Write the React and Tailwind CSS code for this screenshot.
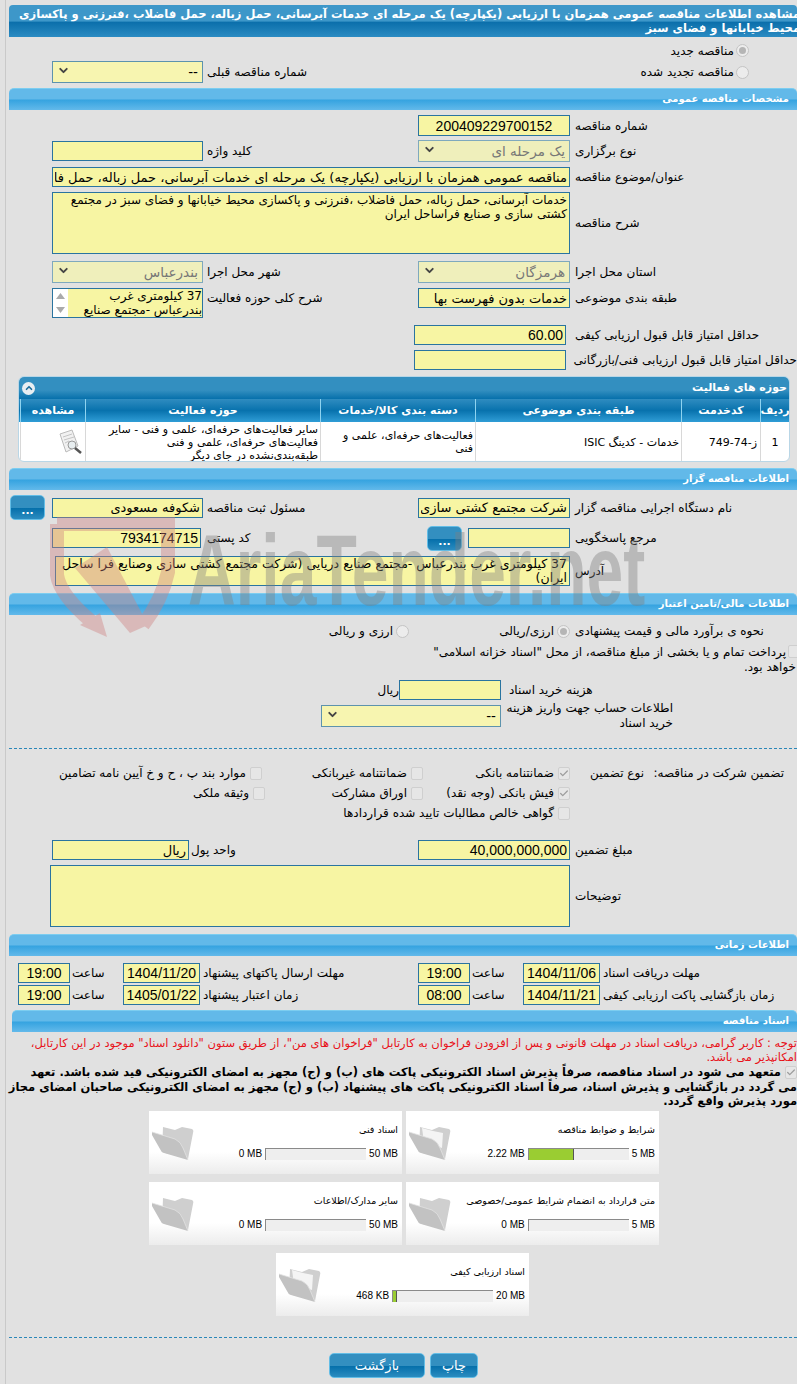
import React from 'react';
import { twMerge } from 'tailwind-merge';
import { Check, ChevronDown, ChevronUp } from 'lucide-react';

const field = 'block shrink-0 bg-[#f7f5a3] border border-[#2a74a0] text-[13px] leading-[18px] text-black outline-none px-0.5 m-0 resize-none';
const num = "font-['Liberation_Sans','DejaVu_Sans',sans-serif] text-[14px]";

const Input = ({ value = '', className }) => (
  <input readOnly value={value} dir="rtl" className={twMerge(field, className)} />
);

const Area = ({ value = '', className }) => (
  <textarea readOnly value={value} dir="rtl" className={twMerge(field, 'overflow-hidden', className)} />
);

const Select = ({ value, disabled, className }) => (
  <div className={twMerge('flex shrink-0 items-center justify-between border px-1 text-[13.5px]', disabled ? 'bg-[#efefbb] border-[#7fa9bd] text-[#777]' : 'bg-[#f7f5b0] border-[#5d93ad] text-black', className)}>
    <span>{value}</span>
    <ChevronDown size={13} strokeWidth={3.5} className="-mt-1 text-[#444]" />
  </div>
);

const Radio = ({ on }) => (
  <span className="flex h-[13px] w-[13px] shrink-0 items-center justify-center rounded-full border border-[#c4c4c4] bg-[#ececec]">
    {on && <span className="h-[7px] w-[7px] rounded-full bg-[#b5b5b5]" />}
  </span>
);

const Box = ({ on }) => (
  <span className="flex h-[13px] w-[12px] shrink-0 items-center justify-center rounded-[2px] border border-[#cfcfcf] bg-[#e6e6e6]">
    {on && <Check size={11} strokeWidth={3} className="text-[#9c9c9c]" />}
  </span>
);

const Bar = ({ title, className }) => (
  <div className={twMerge('h-[22px] rounded-t-[5px] border-t border-[#7ccdf0] bg-[linear-gradient(#62b9e9_0%,#62b9e9_48%,#35a3e0_52%,#62b9ea_100%)] pr-2 text-[10px] font-bold leading-[20px] text-white', className)}>
    {title}
  </div>
);

const Dots = ({ className }) => (
  <div className={twMerge('flex h-[25px] w-[35px] shrink-0 items-end justify-center rounded-[5px] border border-[#63bde6] bg-[linear-gradient(#338fc0_0%,#338fc0_50%,#0670ab_54%,#2b8cc0_100%)] pb-0.5 text-[11px] font-bold leading-[12px] text-white', className)}>
    ...
  </div>
);

const Btn = ({ children, className }) => (
  <div className={twMerge('flex h-[25px] items-center justify-center rounded-[5px] border border-[#63bde6] bg-[linear-gradient(#338fc0_0%,#338fc0_50%,#0670ab_54%,#2b8cc0_100%)] text-[13px] text-white', className)}>
    {children}
  </div>
);

const LabelR = ({ children, className }) => (
  <div className={twMerge('w-[227px] shrink-0 whitespace-nowrap pl-[5px] text-left', className)}>{children}</div>
);

const LabelL = ({ children, className }) => (
  <div className={twMerge('w-[215px] shrink-0 whitespace-nowrap pl-[4px] text-left', className)}>{children}</div>
);

const Folder = ({ paper }) => (
  <svg width="46" height="40" viewBox="0 0 46 40" className="shrink-0">
    <path d="M12 3 L24 6 L31 3 L41 5 Q43 6 42 9 L37 35 L11 28 Z" fill="#cfcfcf" />
    {paper && <path d="M14 4 L25 7 L35 9 L34 24 L16 18 Z" fill="#f4f4f4" />}
    <path d="M1 8 L24 15 Q30 18 32 24 L37 36 L13 29 Q10 28 9 25 L1 11 Z" fill="#c2c2c2" />
    <path d="M1 8 L24 15 Q30 18 32 24 L37 36" fill="none" stroke="#e2e2e2" strokeWidth="0.8" />
  </svg>
);

const DocCard = ({ title, used, max, pct, paper, className }) => (
  <div className={twMerge('flex h-[63px] w-[253px] items-start bg-[linear-gradient(#ffffff_0%,#ffffff_65%,#ececec_100%)] pr-[4px]', className)}>
    <div className="flex-1 pt-[13px]">
      <div className="h-[22px] whitespace-nowrap text-[9.5px] leading-[12px]">{title}</div>
      <div className="mt-[2px] flex items-center gap-[3px] font-['Liberation_Sans',sans-serif] text-[10px] leading-[12px]">
        <span dir="ltr" className="whitespace-nowrap">{max}</span>
        <div dir="ltr" className="h-[12px] w-[101px] shrink-0 border-l border-t border-[#8a8a8a] bg-[#eeeeee]">
          {pct > 0 && <div className="h-full border-r border-[#555] bg-[#9acd32]" style={{ width: `${pct}%` }} />}
        </div>
        <span dir="ltr" className="whitespace-nowrap">{used}</span>
      </div>
    </div>
    <div className="ml-[2px] mt-[13px]"><Folder paper={paper} /></div>
  </div>
);

const TH = ({ children, className }) => (
  <div className={twMerge('flex items-center justify-center whitespace-nowrap border-l border-[#8ed3f0] text-[11px] font-bold text-white', className)}>{children}</div>
);

const TD = ({ children, className }) => (
  <div className={twMerge('flex items-center border-l border-[#d8d8d8] px-0.5 text-[11px] leading-[13px]', className)}>{children}</div>
);

const Watermark = () => (
  <div className="pointer-events-none absolute left-[40px] top-[500px] z-10 h-[150px] w-[620px]">
    <svg width="150" height="145" viewBox="0 0 150 145" className="absolute left-0 top-0 opacity-40">
      <path d="M17 24 H128 V72 Q122 100 103 125 M17 24 V75 Q20 95 52 122" fill="none" stroke="#cf7f7f" strokeWidth="14" />
      <path d="M35 68 L67 47 L108 125 L90 133 Z" fill="#cf7f7f" />
      <path d="M40 125 L60 113 L67 137 Z" fill="#cf7f7f" />
    </svg>
    <div dir="ltr" className="absolute left-[148px] top-[20px] origin-left scale-x-[0.66] whitespace-nowrap font-['Liberation_Sans',sans-serif] text-[100px] font-bold leading-[100px] text-[#808080] opacity-40">
      AriaTender.net
    </div>
  </div>
);

export default function App() {
  return (
    <div dir="rtl" className="relative h-[1384px] w-[797px] overflow-hidden bg-[#e1e1e1] font-['DejaVu_Sans',sans-serif] text-[12px] leading-[16px] text-black">
      <div className="absolute bottom-0 left-[5px] top-0 w-px bg-[#c9c9c9]" />
      <Watermark />

      <div className="ml-[9px] pt-[5px]">
        {/* title */}
        <div className="h-[32px] overflow-hidden rounded-t-[4px] bg-[linear-gradient(#3d97c9_0%,#3d97c9_50%,#0b6fab_54%,#2b8bc2_100%)] pt-[2px] text-[11.5px] font-bold leading-[14px] text-white">
          <div className="-mr-[3px] whitespace-nowrap">مشاهده اطلاعات مناقصه عمومی همزمان با ارزیابی (یکپارچه) یک مرحله ای خدمات آبرسانی، حمل زباله، حمل فاضلاب ،فنرزنی و پاکسازی</div>
          <div className="-mr-[3px] whitespace-nowrap">محیط خیابانها و فضای سبز</div>
        </div>

        <div className="mt-[5px] flex h-[17px] items-center gap-[2px] pr-[48px]">
          <Radio on /><span>مناقصه جدید</span>
        </div>
        <div className="mt-[2px] flex h-[22px]">
          <div className="flex w-[379px] shrink-0 items-center gap-[2px] pr-[48px]"><Radio /><span className="whitespace-nowrap">مناقصه تجدید شده</span></div>
          <LabelL className="self-center">شماره مناقصه قبلی</LabelL>
          <Select value="--" className="h-[22px] w-[151px]" />
        </div>

        <Bar title="مشخصات مناقصه عمومی" className="mt-[5px]" />
      </div>

      {/* general */}
      <div className="mt-[5px] flex h-[21px] items-center"><LabelR>شماره مناقصه</LabelR><Input value="200409229700152" className={`h-[21px] w-[152px] text-center ${num}`} /></div>
      <div className="mt-[4px] flex h-[22px] items-center">
        <LabelR>نوع برگزاری</LabelR><Select disabled value="یک مرحله ای" className="h-[22px] w-[152px]" />
        <LabelL>کلید واژه</LabelL><Input className="h-[20px] w-[151px]" />
      </div>
      <div className="mt-[5px] flex h-[20px] items-center">
        <LabelR>عنوان/موضوع مناقصه</LabelR>
        <Input value="مناقصه عمومی همزمان با ارزیابی (یکپارچه) یک مرحله ای خدمات آبرسانی، حمل زباله، حمل فاضلاب ،فنرزنی و پاکسازی" className="h-[20px] w-[518px]" />
      </div>
      <div className="mt-[5px] flex h-[62px] items-center">
        <LabelR>شرح مناقصه</LabelR>
        <Area value="خدمات آبرسانی، حمل زباله، حمل فاضلاب ،فنرزنی و پاکسازی محیط خیابانها و فضای سبز در مجتمع کشتی سازی و صنایع فراساحل ایران" className="h-[62px] w-[518px] text-[12px] leading-[14px]" />
      </div>
      <div className="mt-[7px] flex h-[22px] items-center">
        <LabelR>استان محل اجرا</LabelR><Select disabled value="هرمزگان" className="h-[22px] w-[152px]" />
        <LabelL>شهر محل اجرا</LabelL><Select disabled value="بندرعباس" className="h-[22px] w-[151px]" />
      </div>
      <div className="mt-[5px] flex h-[30px] items-start">
        <LabelR className="pt-[2px]">طبقه بندی موضوعی</LabelR><Input value="خدمات بدون فهرست بها" className="h-[20px] w-[152px]" />
        <LabelL className="pt-[2px]">شرح کلی حوزه فعالیت</LabelL>
        <div className="flex h-[30px] w-[151px] shrink-0 border border-[#2a74a0] bg-[#f7f5a3]">
          <div className="flex-1 overflow-hidden text-[12px] leading-[14px]">37 کیلومتری غرب<br />بندرعباس -مجتمع صنایع</div>
          <div className="flex w-[15px] flex-col items-center justify-between bg-white py-[4px]">
            <svg width="9" height="6" viewBox="0 0 9 6"><path d="M4.5 0 L9 6 H0 Z" fill="#aaa" /></svg>
            <svg width="9" height="6" viewBox="0 0 9 6"><path d="M4.5 6 L9 0 H0 Z" fill="#aaa" /></svg>
          </div>
        </div>
      </div>
      <div className="mt-[7px] flex h-[20px] items-center"><LabelR>حداقل امتیاز قابل قبول ارزیابی کیفی</LabelR><Input value="60.00" className={`mr-[4px] h-[20px] w-[152px] ${num}`} /></div>
      <div className="mt-[5px] flex h-[20px] items-center"><LabelR>حداقل امتیاز قابل قبول ارزیابی فنی/بازرگانی</LabelR><Input className="mr-[4px] h-[20px] w-[152px]" /></div>

      {/* activity table */}
      <div className="mr-[7px] mt-[6px] h-[86px] w-[772px] overflow-hidden rounded-[6px] border border-[#b9d6e6] bg-white">
        <div className="flex h-[22px] items-center justify-between bg-[linear-gradient(#338fc0_0%,#338fc0_60%,#0670ab_100%)] pl-[3px] pr-[2px] text-[11px] font-bold text-white">
          <span>حوزه های فعالیت</span>
          <span className="flex h-[13px] w-[13px] items-center justify-center rounded-full bg-[#e8eef2]"><ChevronUp size={10} strokeWidth={4} className="text-[#1b6d9d]" /></span>
        </div>
        <div className="grid h-[23px] grid-cols-[29px_79px_206px_155px_235px_65px_1fr] bg-[linear-gradient(#2f8cc0_0%,#0872ad_50%,#2f9dd6_100%)]">
          <TH>ردیف</TH><TH>کدخدمت</TH><TH>طبقه بندی موضوعی</TH><TH>دسته بندی کالا/خدمات</TH><TH>حوزه فعالیت</TH><TH>مشاهده</TH><div />
        </div>
        <div className="grid h-[40px] grid-cols-[29px_79px_206px_155px_235px_65px_1fr] overflow-hidden">
          <TD className="justify-center">1</TD>
          <TD className="pr-[3px]">ز-74-749</TD>
          <TD>خدمات - کدینگ ISIC</TD>
          <TD>فعالیت‌های حرفه‌ای، علمی و فنی</TD>
          <TD><span>سایر فعالیت‌های حرفه‌ای، علمی و فنی - سایر<br />فعالیت‌های حرفه‌ای، علمی و فنی<br />طبقه‌بندی‌نشده در جای دیگر</span></TD>
          <TD>
            <svg width="26" height="26" viewBox="0 0 26 26">
              <path d="M3 5 L15 1 L21 17 L9 23 Z" fill="#f1f1f1" stroke="#bbb" />
              <path d="M6 8 L15 5 M7 11 L17 8 M8 14 L12 12" stroke="#c4c4c4" />
              <circle cx="15" cy="16" r="4" fill="#e8eef0" stroke="#999" />
              <path d="M18 19 L24 24" stroke="#555" strokeWidth="2.5" />
            </svg>
          </TD>
          <div />
        </div>
      </div>

      {/* tenderer */}
      <div className="ml-[9px]"><Bar title="اطلاعات مناقصه گزار" className="mt-[6px]" /></div>
      <div className="mt-[5px] flex h-[25px] items-center">
        <LabelR>نام دستگاه اجرایی مناقصه گزار</LabelR><Input value="شرکت مجتمع کشتی سازی و صنایع فراساحل ایران" className="h-[20px] w-[152px]" />
        <LabelL>مسئول ثبت مناقصه</LabelL><Input value="شکوفه مسعودی" className="h-[20px] w-[151px]" />
        <Dots className="mr-[7px]" />
      </div>
      <div className="mt-[5px] flex h-[26px] items-center">
        <LabelR>مرجع پاسخگویی</LabelR><Input className="h-[20px] w-[102px]" />
        <Dots className="mr-[6px]" />
        <div className="w-[226px] shrink-0 pl-[6px] text-left">کد پستی</div><Input value="7934174715" className={`h-[20px] w-[149px] ${num}`} />
      </div>
      <div className="mt-[5px] flex h-[30px] items-center">
        <LabelR>آدرس</LabelR>
        <Area value="37 کیلومتری غرب بندرعباس -مجتمع صنایع دریایی (شرکت مجتمع کشتی سازی وصنایع فرا ساحل ایران)" className="h-[30px] w-[515px] text-[12.5px] leading-[14px]" />
      </div>

      {/* finance */}
      <div className="ml-[9px]"><Bar title="اطلاعات مالی/تامین اعتبار" className="mt-[7px]" /></div>
      <div className="mt-[7px] flex h-[18px] items-center">
        <LabelR>نحوه ی برآورد مالی و قیمت پیشنهادی</LabelR>
        <div className="flex w-[161px] items-center gap-[3px]"><Radio on /><span>ارزی/ریالی</span></div>
        <div className="flex items-center gap-[3px]"><Radio /><span>ارزی و ریالی</span></div>
      </div>
      <div className="-mr-[3px] mt-[5px] flex h-[32px] items-start gap-[2px] whitespace-nowrap leading-[15px]">
        <Box />
        <div>پرداخت تمام و یا بخشی از مبلغ مناقصه، از محل "اسناد خزانه اسلامی"<br /><span className="-mr-[10px]">خواهد بود.</span></div>
      </div>
      <div className="mt-[3px] flex h-[20px] items-center">
        <div className="w-[296px] shrink-0 pl-[8px] text-left">هزینه خرید اسناد</div>
        <Input className="h-[20px] w-[102px]" />
        <span>ریال</span>
      </div>
      <div className="mt-[5px] flex h-[22px] items-center">
        <div className="w-[296px] shrink-0 whitespace-nowrap pl-[8px] text-left leading-[15px]"><span className="inline-block w-[164px] text-right">اطلاعات حساب جهت واریز هزینه<br />خرید اسناد</span></div>
        <Select value="--" className="h-[22px] w-[180px]" />
      </div>

      <div className="ml-[9px] mt-[21px] border-t border-dashed border-[#2a87b8]" />

      {/* guarantee */}
      <div className="mt-[14px] flex h-[20px] items-center">
        <div className="w-[153px] shrink-0 whitespace-nowrap pr-[13px]">تضمین شرکت در مناقصه:</div>
        <div className="w-[74px] shrink-0">نوع تضمین</div>
        <div className="flex w-[147px] items-center gap-[4px]"><Box on />ضمانتنامه بانکی</div>
        <div className="flex w-[161px] items-center gap-[4px]"><Box />ضمانتنامه غیربانکی</div>
        <div className="flex items-center gap-[4px] whitespace-nowrap"><Box />موارد بند پ ، ح و خ آیین نامه تضامین</div>
      </div>
      <div className="mr-[227px] flex h-[20px] items-center">
        <div className="flex w-[147px] items-center gap-[4px]"><Box on />فیش بانکی (وجه نقد)</div>
        <div className="flex w-[158px] items-center gap-[4px]"><Box />اوراق مشارکت</div>
        <div className="flex items-center gap-[4px]"><Box />وثیقه ملکی</div>
      </div>
      <div className="mr-[227px] flex h-[20px] items-center gap-[4px]"><Box />گواهی خالص مطالبات تایید شده قراردادها</div>

      <div className="mt-[17px] flex h-[20px] items-center">
        <LabelR>مبلغ تضمین</LabelR><Input value="40,000,000,000" className={`h-[20px] w-[152px] ${num}`} />
        <div className="w-[229px] shrink-0 pl-[2px] text-left">واحد پول</div><Input value="ریال" className="h-[20px] w-[137px]" />
      </div>
      <div className="mt-[5px] flex h-[62px] items-center"><LabelR>توضیحات</LabelR><Area className="h-[62px] w-[520px]" /></div>

      {/* dates */}
      <div className="ml-[9px]"><Bar title="اطلاعات زمانی" className="mt-[7px]" /></div>
      {[
        ['مهلت دریافت اسناد', '1404/11/06', '19:00', 'مهلت ارسال پاکتهای پیشنهاد', '1404/11/20', '19:00', 'mt-[7px]'],
        ['زمان بازگشایی پاکت ارزیابی کیفی', '1404/11/21', '08:00', 'زمان اعتبار پیشنهاد', '1405/01/22', '19:00', 'mt-[2px]'],
      ].map(([a, b, c, d, e, f, mt]) => (
        <div key={a} className={twMerge('flex h-[20px] items-center', mt)}>
          <div className="w-[197px] shrink-0 whitespace-nowrap pl-[3px] text-left">{a}</div>
          <Input value={b} className={`h-[20px] w-[77px] text-center ${num}`} />
          <div className="w-[53px] shrink-0 pl-[2px] text-left">ساعت</div>
          <Input value={c} className={`h-[20px] w-[52px] text-center ${num}`} />
          <div className="w-[218px] shrink-0 whitespace-nowrap pl-[3px] text-left">{d}</div>
          <Input value={e} className={`h-[20px] w-[77px] text-center ${num}`} />
          <div className="w-[53px] shrink-0 pl-[2px] text-left">ساعت</div>
          <Input value={f} className={`h-[20px] w-[52px] text-center ${num}`} />
        </div>
      ))}

      {/* documents */}
      <div className="ml-[12px]"><Bar title="اسناد مناقصه" className="mt-[5px]" /></div>
      <div className="mt-[4px] whitespace-nowrap text-[11.5px] leading-[14px] text-[#e8121a]">
        توجه : کاربر گرامی، دریافت اسناد در مهلت قانونی و پس از افزودن فراخوان به کارتابل "فراخوان های من"، از طریق ستون "دانلود اسناد" موجود در این کارتابل،<br />
        امکانپذیر می باشد.
      </div>
      <div className="mt-[1px] h-[44px] whitespace-nowrap text-[11.5px] font-bold leading-[14.5px]">
        <span className="inline-block align-middle"><Box on /></span> متعهد می شود در اسناد مناقصه، صرفاً پذیرش اسناد الکترونیکی پاکت های (ب) و (ج) مجهز به امضای الکترونیکی قید شده باشد. تعهد<br />
        می گردد در بازگشایی و پذیرش اسناد، صرفاً اسناد الکترونیکی پاکت های پیشنهاد (ب) و (ج) مجهز به امضای الکترونیکی صاحبان امضای مجاز<br />
        مورد پذیرش واقع گردد.
      </div>

      <div className="mr-[138px] mt-[2px] grid w-[510px] grid-cols-2 gap-x-[4px] gap-y-[8px]">
        <DocCard title="شرایط و ضوابط مناقصه" used="2.22 MB" max="5 MB" pct={45} paper />
        <DocCard title="اسناد فنی" used="0 MB" max="50 MB" pct={0} />
        <DocCard title="متن قرارداد به انضمام شرایط عمومی/خصوصی" used="0 MB" max="5 MB" pct={0} />
        <DocCard title="سایر مدارک/اطلاعات" used="0 MB" max="50 MB" pct={0} />
      </div>
      <div className="mt-[8px] flex justify-center pl-[8px]">
        <DocCard title="اسناد ارزیابی کیفی" used="468 KB" max="20 MB" pct={4} paper />
      </div>

      <div className="ml-[9px] mt-[21px] border-t border-dashed border-[#2a87b8]" />

      <div className="mr-[319px] mt-[15px] flex gap-[5px]">
        <Btn className="w-[48px]">چاپ</Btn>
        <Btn className="w-[96px]">بازگشت</Btn>
      </div>
    </div>
  );
}
